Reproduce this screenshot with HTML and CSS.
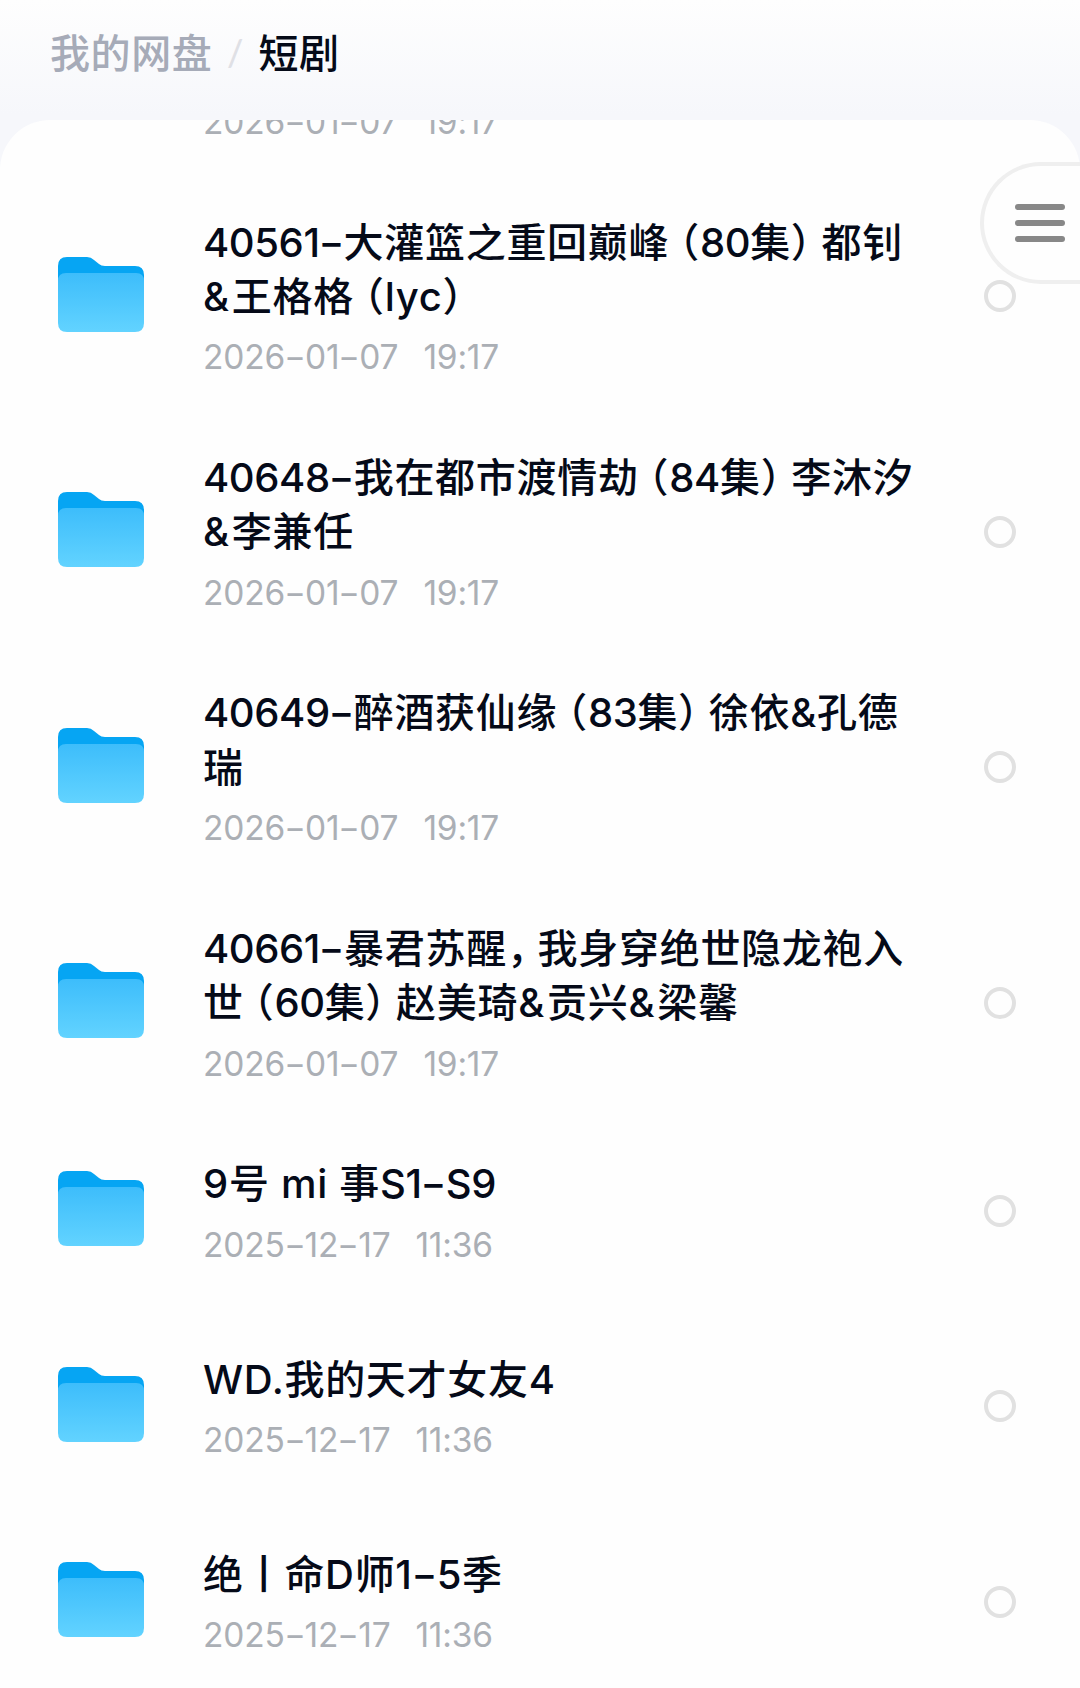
FILE: index.html
```html
<!DOCTYPE html>
<html lang="zh-CN">
<head>
    <meta charset="UTF-8">
    <meta name="viewport" content="width=device-width, initial-scale=1.0">
    <title>短剧</title>
    <link rel="stylesheet" href="styles.css">
</head>
<body>
    <svg class="defs" width="0" height="0">
        <defs>
            <linearGradient id="front" x1="0" y1="0" x2="0" y2="1">
                <stop offset="0" stop-color="#3dbdfb"/>
                <stop offset="1" stop-color="#62d3ff"/>
            </linearGradient>
            <symbol id="folder" viewBox="0 0 86 75">
                <path d="M0 9Q0 0 9 0H29Q33 0 36 3L41 7Q43 9 47 9H77Q86 9 86 18V40H0Z" fill="#06a5f3"/>
                <path d="M0 24Q0 16 8 16H78Q86 16 86 24V66Q86 75 77 75H9Q0 75 0 66Z" fill="url(#front)"/>
            </symbol>
        </defs>
    </svg>

    <div class="breadcrumb">
        <span class="parent">我的网盘</span>
        <span class="slash">/</span>
        <span class="current">短剧</span>
    </div>

    <div class="panel">
        <!-- строка, прокрученная под шапку -->
        <div class="row first">
            <div class="info">
                <div class="date">2026<i>-</i>01<i>-</i>07<b></b>19:17</div>
            </div>
        </div>
        <div class="row">
            <svg class="folder"><use href="#folder"/></svg>
            <div class="info">
                <div class="name"><span class="num">40561</span><i>-</i>大灌篮之重回巅峰<span class="open">（</span><span class="num">80</span>集<span class="close">）</span>都钊<br><span class="amp">&amp;</span>王格格<span class="open">（</span>lyc<span class="close">）</span></div>
                <div class="date">2026<i>-</i>01<i>-</i>07<b></b>19:17</div>
            </div>
            <span class="radio"></span>
        </div>
        <div class="row">
            <svg class="folder"><use href="#folder"/></svg>
            <div class="info">
                <div class="name"><span class="num">40648</span><i>-</i>我在都市渡情劫<span class="open">（</span><span class="num">84</span>集<span class="close">）</span>李沐汐<br><span class="amp">&amp;</span>李兼任</div>
                <div class="date">2026<i>-</i>01<i>-</i>07<b></b>19:17</div>
            </div>
            <span class="radio"></span>
        </div>
        <div class="row">
            <svg class="folder"><use href="#folder"/></svg>
            <div class="info">
                <div class="name"><span class="num">40649</span><i>-</i>醉酒获仙缘<span class="open">（</span><span class="num">83</span>集<span class="close">）</span>徐依&amp;孔德<br>瑞</div>
                <div class="date">2026<i>-</i>01<i>-</i>07<b></b>19:17</div>
            </div>
            <span class="radio"></span>
        </div>
        <div class="row">
            <svg class="folder"><use href="#folder"/></svg>
            <div class="info">
                <div class="name"><span class="num">40661</span><i>-</i>暴君苏醒<span class="close">，</span>我身穿绝世隐龙袍入<br>世<span class="open">（</span><span class="num">60</span>集<span class="close">）</span>赵美琦<span class="amp">&amp;</span>贡兴<span class="amp">&amp;</span>梁馨</div>
                <div class="date">2026<i>-</i>01<i>-</i>07<b></b>19:17</div>
            </div>
            <span class="radio"></span>
        </div>
        <div class="row short">
            <svg class="folder"><use href="#folder"/></svg>
            <div class="info">
                <div class="name">9号 mi 事<span class="num">S1</span><i>-</i><span class="num">S9</span></div>
                <div class="date">2025<i>-</i>12<i>-</i>17<b></b>11:36</div>
            </div>
            <span class="radio"></span>
        </div>
        <div class="row short">
            <svg class="folder"><use href="#folder"/></svg>
            <div class="info">
                <div class="name">WD.我的天才女友4</div>
                <div class="date">2025<i>-</i>12<i>-</i>17<b></b>11:36</div>
            </div>
            <span class="radio"></span>
        </div>
        <div class="row short">
            <svg class="folder"><use href="#folder"/></svg>
            <div class="info">
                <div class="name">绝丨命D师1<i>-</i>5季</div>
                <div class="date">2025<i>-</i>12<i>-</i>17<b></b>11:36</div>
            </div>
            <span class="radio"></span>
        </div>
    </div>

    <div class="menu">
        <span></span>
        <span></span>
        <span></span>
    </div>
</body>
</html>
```
FILE: styles.css
```css
body {
    margin: 0;
    height: 1688px;
    overflow: hidden;
    display: flex;
    flex-direction: column;
    background: linear-gradient(#fefefe 0, #f6f7fb 115px, #f6f7fb 100%);
    font-family: Inter, "Noto Sans CJK SC", sans-serif;
    color: #050a18;
}
.defs {
    position: absolute;
}
.breadcrumb {
    height: 119.5px;
    padding: 25px 0 0 50px;
    box-sizing: border-box;
    display: flex;
    flex-shrink: 0;
    font-size: 40px;
    font-weight: 500;
    line-height: 58px;
    letter-spacing: 0.6px;
}
.parent {
    color: #a6abb8;
}
.slash {
    width: 46px;
    text-align: center;
    color: #dfe0e5;
    font-family: Lato, sans-serif;
    font-size: 36px;
    line-height: 54px;
}
.panel {
    flex: 1;
    overflow: hidden;
    background: #fefefe;
    border-radius: 50px 50px 0 0;
}
.row {
    display: flex;
    align-items: center;
    padding: 0 64px 71.6px 58px;
}
.row.short {
    padding-bottom: 86px;
}
.row.first {
    margin-top: -30.6px;
    padding-left: 203px;
}
.folder {
    width: 86px;
    height: 75px;
    margin: 0 59px 6px 0;
    flex-shrink: 0;
}
.info {
    flex: 1;
    white-space: nowrap;
}
.name {
    font-size: 40px;
    font-weight: 500;
    line-height: 54.4px;
    letter-spacing: 0.7px;
}
.num {
    letter-spacing: -0.4px;
}
.amp {
    margin-right: 2px;
}
.date {
    margin-top: 11px;
    font-size: 33.5px;
    line-height: 44px;
    letter-spacing: -0.2px;
    color: #abafb5;
}
.date b {
    display: inline-block;
    width: 25px;
}
/* дефис шире, чем в шрифте */
.name i,
.date i {
    display: inline-block;
    width: 24px;
    font-style: normal;
    text-align: center;
    transform: scaleX(1.4);
}
.date i {
    width: 20px;
}
.open,
.close {
    font-feature-settings: "halt";
}
.open {
    margin-left: 10px;
}
.close {
    margin-right: 10px;
}
.radio {
    width: 32px;
    height: 32px;
    margin-bottom: 2px;
    box-sizing: border-box;
    border: 4px solid #e1e1e1;
    border-radius: 50%;
}
.menu {
    position: absolute;
    top: 162px;
    right: -10px;
    width: 110px;
    height: 122px;
    box-sizing: border-box;
    padding-left: 31px;
    display: flex;
    flex-direction: column;
    justify-content: center;
    gap: 10px;
    background: #fefefe;
    border: 4px solid #efefef;
    border-right: none;
    border-radius: 61px 0 0 61px;
}
.menu span {
    width: 50px;
    height: 6px;
    border-radius: 3px;
    background: #888;
}
```
